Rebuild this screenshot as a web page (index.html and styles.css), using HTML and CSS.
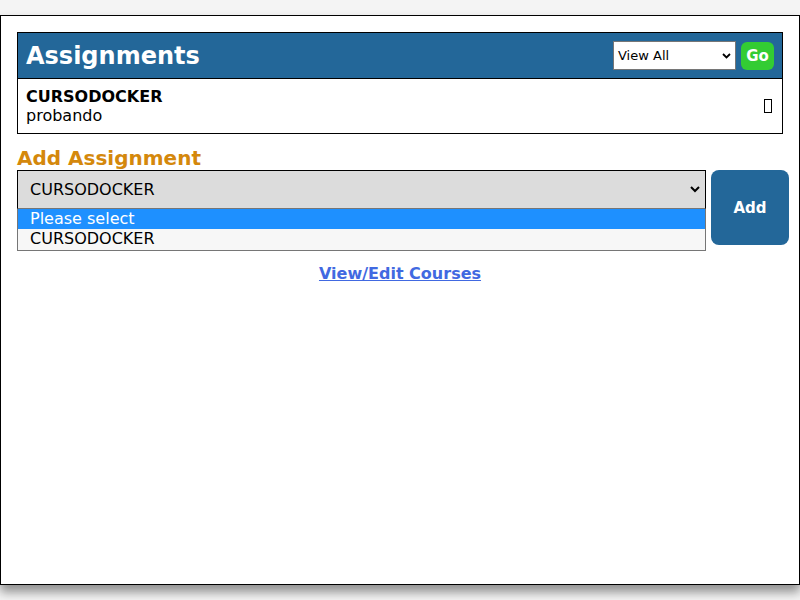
FILE: index.html
```html
<!DOCTYPE html>
<html>
<head>
<meta charset="utf-8">
<link rel="stylesheet" href="styles.css">
</head>
<body>
<div class="page">
  <div class="panel">
    <div class="panel-head">
      <h1 class="title">Assignments</h1>
      <div class="filter">
        <div class="mini-select"><span>View All</span><svg class="chev" width="9" height="6" viewBox="0 0 9 6"><path d="M1 1 L4.5 4.5 L8 1" fill="none" stroke="#000" stroke-width="1.8"/></svg></div>
        <button class="go">Go</button>
      </div>
    </div>
    <div class="panel-row">
      <div class="row-text">
        <div class="course">CURSODOCKER</div>
        <div class="desc">probando</div>
      </div>
      <span class="tofu"></span>
    </div>
  </div>
  <h2 class="add-title">Add Assignment</h2>
  <div class="add-form">
    <div class="combo">
      <div class="combo-box"><span>CURSODOCKER</span><svg class="chev" width="10" height="7" viewBox="0 0 10 7"><path d="M1 1 L5 5 L9 1" fill="none" stroke="#000" stroke-width="2"/></svg></div>
      <div class="combo-list">
        <div class="opt opt-active">Please select</div>
        <div class="opt">CURSODOCKER</div>
      </div>
    </div>
    <button class="add-btn">Add</button>
  </div>
  <div class="links"><a href="#" class="link">View/Edit Courses</a></div>
</div>
</body>
</html>
```
FILE: styles.css
```css
html, body {
  margin: 0;
  padding: 0;
}
body {
  background: #f4f4f4;
  font-family: "DejaVu Sans", sans-serif;
  padding-top: 15px;
  min-height: 600px;
  box-sizing: border-box;
}
.page {
  box-sizing: border-box;
  width: 800px;
  height: 570px;
  background: #fff;
  border: 1px solid #000;
  box-shadow: 0 7px 10px rgba(0,0,0,0.42);
  padding: 16px;
}
.panel {
  border: 1px solid #000;
  width: 766px;
  box-sizing: border-box;
}
.panel-head {
  background: #236799;
  height: 45px;
  border-bottom: 1px solid #000;
  display: flex;
  align-items: center;
  justify-content: space-between;
  padding: 0 8px;
}
.title {
  margin: 0;
  color: #fff;
  font-size: 24px;
  font-weight: bold;
  line-height: 28px;
}
.filter {
  display: flex;
  align-items: center;
  gap: 5px;
}
.mini-select {
  box-sizing: border-box;
  width: 123px;
  height: 29px;
  background: #fff;
  border: 1px solid #767676;
  display: flex;
  align-items: center;
  justify-content: space-between;
  padding: 0 4px 0 4px;
  font-size: 13px;
  color: #000;
}
.go {
  box-sizing: border-box;
  width: 33px;
  height: 28px;
  border: none;
  border-radius: 6px;
  background: #33cc33;
  color: #fff;
  font-family: "DejaVu Sans", sans-serif;
  font-weight: bold;
  font-size: 15px;
  padding: 0;
}
.panel-row {
  display: flex;
  align-items: center;
  justify-content: space-between;
  padding: 8px 9px 8px 8px;
  font-size: 16px;
  line-height: 19px;
}
.course {
  font-weight: bold;
}
.tofu {
  display: inline-block;
  box-sizing: border-box;
  width: 8px;
  height: 14px;
  border: 1px solid #000;
  margin-right: 1px;
}
.add-title {
  margin: 13px 0 0 0;
  font-size: 20px;
  line-height: 23px;
  font-weight: bold;
  color: #d4880c;
}
.add-form {
  display: flex;
  gap: 5px;
  align-items: flex-start;
}
.combo {
  width: 689px;
  flex-shrink: 0;
}
.combo-box {
  box-sizing: border-box;
  height: 39px;
  background: #dcdcdc;
  border: 1px solid #000;
  border-bottom: 1px solid #767676;
  display: flex;
  align-items: center;
  justify-content: space-between;
  padding: 0 5px 0 12px;
  font-size: 16px;
}
.combo-list {
  border: 1px solid #767676;
  border-top: none;
  background: #f7f7f7;
  font-size: 16px;
}
.opt {
  height: 20px;
  line-height: 20px;
  padding-left: 12px;
  color: #000;
}
.opt + .opt {
  height: 21px;
}
.opt-active {
  background: #1e90ff;
  color: #fff;
}
.add-btn {
  flex-shrink: 0;
  width: 78px;
  height: 75px;
  border: none;
  border-radius: 8px;
  background: #236799;
  color: #fff;
  font-family: "DejaVu Sans", sans-serif;
  font-weight: bold;
  font-size: 15px;
  padding: 0;
}
.links {
  text-align: center;
  margin-top: 13px;
}
.link {
  color: #4169e1;
  font-weight: bold;
  font-size: 16px;
  line-height: 20px;
}
```
